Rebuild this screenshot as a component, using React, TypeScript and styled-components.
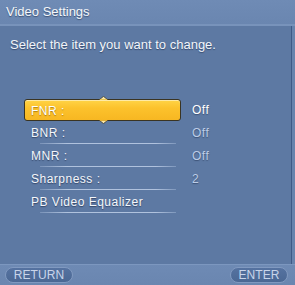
import React from "react";
import styled, { createGlobalStyle } from "styled-components";

const Global = createGlobalStyle`
  html, body { margin: 0; padding: 0; background: #5d79a3; }
  body { font-family: "Liberation Sans", Arial, sans-serif; }
`;

const Screen = styled.div`
  width: 295px;
  height: 285px;
  display: flex;
  flex-direction: column;
  background: #5d79a3;
  overflow: hidden;
`;

const TitleBar = styled.div`
  height: 24px;
  line-height: 24px;
  padding-left: 6px;
  background: linear-gradient(#6f8bb5, #6a86b0);
  border-bottom: 2px solid #7893bb;
  color: #f4f7fb;
  font-size: 13px;
  text-shadow: 0 1px 1px rgba(30, 45, 75, 0.6);
`;

const Body = styled.div`
  flex: 1;
  display: flex;
`;

const Content = styled.div`
  flex: 1;
  display: flex;
  flex-direction: column;
`;

const RightEdge = styled.div`
  width: 3px;
  border-left: 1px solid #3f5a86;
  background: #6783ad;
`;

const Prompt = styled.div`
  margin: 11px 0 0 10px;
  font-size: 13px;
  line-height: 15px;
  color: #f2f5fa;
  text-shadow: 0 1px 1px rgba(30, 45, 75, 0.6);
`;

const List = styled.div`
  margin: 47px 0 0 24px;
  display: flex;
  flex-direction: column;
`;

const Row = styled.div<{ $active?: boolean }>`
  display: grid;
  grid-template-columns: 157px 1fr;
  column-gap: 11px;
  align-items: center;
  height: ${(p) => (p.$active ? "22px" : "23px")};
  position: relative;
`;

const Label = styled.div<{ $active?: boolean }>`
  position: relative;
  box-sizing: border-box;
  height: ${(p) => (p.$active ? "22px" : "23px")};
  padding: ${(p) => (p.$active ? "0 0 0 6px" : "1px 0 0 7px")};
  line-height: 22px;
  font-size: 12px;
  letter-spacing: 0.5px;
  color: #f4f7fb;
  text-shadow: 0 1px 1px rgba(30, 45, 75, 0.65);
  ${(p) =>
    p.$active
      ? `
    border: 1px solid #3a3422;
    border-radius: 3px;
    background: linear-gradient(#ffd447, #fcc22c 40%, #f7b722);
    box-shadow: inset 0 1px 0 rgba(255,240,190,0.8);
    text-shadow: 0 1px 1px rgba(120, 80, 0, 0.6);
    color: #ffffff;
  `
      : ``}
`;

const Divider = styled.div`
  position: absolute;
  left: 16px;
  bottom: 0;
  width: 136px;
  height: 1px;
  background: linear-gradient(
    to right,
    rgba(175, 195, 225, 0.35),
    rgba(185, 202, 228, 0.9) 20%,
    rgba(185, 202, 228, 0.9) 85%,
    rgba(175, 195, 225, 0.4)
  );
`;

const Value = styled.div<{ $active?: boolean }>`
  font-size: 12px;
  letter-spacing: 0.5px;
  line-height: 22px;
  padding-top: ${(p) => (p.$active ? "0" : "1px")};
  color: ${(p) => (p.$active ? "#ffffff" : "#bccde7")};
  text-shadow: 0 1px 1px rgba(30, 45, 75, 0.5);
`;

const Notch = styled.svg<{ $up?: boolean }>`
  position: absolute;
  left: 74px;
  ${(p) => (p.$up ? "top: -4px;" : "bottom: -4px;")}
  width: 9px;
  height: 4px;
`;

const Footer = styled.div`
  height: 20px;
  border-top: 1px solid #7c97bf;
  background: linear-gradient(#6e8ab4, #6a86b0);
  display: flex;
  align-items: center;
  justify-content: space-between;
  padding: 0 7px 0 5px;
`;

const Pill = styled.div<{ $w: number }>`
  box-sizing: border-box;
  width: ${(p) => p.$w}px;
  height: 16px;
  line-height: 14px;
  border-radius: 8px;
  border: 1px solid #8099c0;
  background: linear-gradient(#5572a0, #4b6894);
  color: #c8d5ea;
  font-size: 12px;
  text-align: center;
  letter-spacing: 0.1px;
`;

type Item = { label: string; value?: string };

const items: Item[] = [
  { label: "FNR :", value: "Off" },
  { label: "BNR :", value: "Off" },
  { label: "MNR :", value: "Off" },
  { label: "Sharpness :", value: "2" },
  { label: "PB Video Equalizer" },
];

export default function App() {
  return (
    <>
      <Global />
      <Screen>
        <TitleBar>Video Settings</TitleBar>
        <Body>
          <Content>
            <Prompt>Select the item you want to change.</Prompt>
            <List>
              {items.map((it, i) => {
                const active = i === 0;
                return (
                  <Row key={it.label} $active={active}>
                    <Label $active={active}>
                      {it.label}
                      {active && (
                        <>
                          <Notch $up viewBox="0 0 9 4">
                            <path d="M0 4 L4.5 0.4 L9 4 Z" fill="#fbe7a8" stroke="#3a3422" strokeWidth="0.7" />
                            <rect x="0.8" y="3.3" width="7.4" height="0.8" fill="#ffd447" />
                          </Notch>
                          <Notch viewBox="0 0 9 4">
                            <path d="M0 0 L4.5 3.6 L9 0 Z" fill="#fbe7a8" stroke="#3a3422" strokeWidth="0.7" />
                            <rect x="0.8" y="0" width="7.4" height="0.7" fill="#f7b722" />
                          </Notch>
                        </>
                      )}
                    </Label>
                    <Value $active={active}>{it.value ?? ""}</Value>
                    {!active && <Divider />}
                  </Row>
                );
              })}
            </List>
          </Content>
          <RightEdge />
        </Body>
        <Footer>
          <Pill $w={68}>RETURN</Pill>
          <Pill $w={58}>ENTER</Pill>
        </Footer>
      </Screen>
    </>
  );
}
